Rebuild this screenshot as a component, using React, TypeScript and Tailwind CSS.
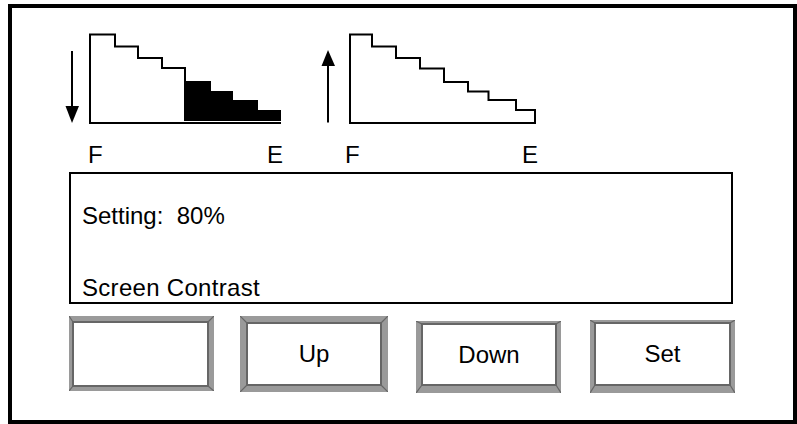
import React from "react";

const font = { fontFamily: '"Liberation Sans", Arial, sans-serif' };

function Btn({
  label,
  outer,
  className,
  w,
  h,
  t,
  l,
  r,
  b,
}: {
  label?: string;
  outer: string;
  className: string;
  w: number;
  h: number;
  t: number;
  l: number;
  r: number;
  b: number;
}) {
  return (
    <div className={`relative ${className} ${outer} border-solid border-[#9a9a9a] bg-white flex`}>
      <div className="flex-1 border-2 border-[#666666] bg-white flex items-center justify-center text-[24px] leading-[24px] text-black">
        {label}
      </div>
      <svg
        className="absolute pointer-events-none"
        style={{ left: -l, top: -t }}
        width={w}
        height={h}
        viewBox={`0 0 ${w} ${h}`}
      >
        <g stroke="#666666" strokeWidth="1.2">
          <line x1="0" y1="0" x2={l + 1} y2={t + 1} />
          <line x1={w} y1="0" x2={w - r - 1} y2={t + 1} />
          <line x1="0" y1={h} x2={l + 1} y2={h - b - 1} />
          <line x1={w} y1={h} x2={w - r - 1} y2={h - b - 1} />
        </g>
      </svg>
    </div>
  );
}

export default function App() {
  return (
    <div className="w-[797px] h-[424px] bg-white" style={font}>
      <div className="ml-[8px] mt-[4px] w-[789px] h-[420px] border-4 border-black box-border">
        {/* charts */}
        <div className="h-[164px] flex pt-[20px]">
          <div className="ml-[48px] flex flex-col">
            <svg width="225" height="98" viewBox="60 28 225 98">
              <line x1="72" y1="51" x2="72" y2="108" stroke="black" strokeWidth="2" />
              <polygon points="65.5,106 79,106 72,123" fill="black" />
              <polyline
                points="90,124 90,34.5 115,34.5 115,46.5 138,46.5 138,58 162,58 162,68 185,68 185,82"
                fill="none"
                stroke="black"
                strokeWidth="2"
              />
              <polygon
                points="184,81 211,81 211,91 233,91 233,100 258,100 258,110 281,110 281,121 184,121"
                fill="black"
              />
              <line x1="89" y1="123" x2="281" y2="123" stroke="black" strokeWidth="2" />
            </svg>
            <div className="mt-[17px] ml-[28px] w-[195px] flex justify-between text-[24px] leading-[24px] text-black">
              <span>F</span>
              <span>E</span>
            </div>
          </div>
          <div className="ml-[33px] flex flex-col">
            <svg width="222" height="98" viewBox="318 28 222 98">
              <line x1="328" y1="64" x2="328" y2="122.5" stroke="black" strokeWidth="2" />
              <polygon points="321.5,66 335,66 328,50" fill="black" />
              <polygon
                points="350,123 350,34.5 372,34.5 372,46.5 396,46.5 396,58 420,58 420,68.5 444,68.5 444,82 468,82 468,91.5 488.5,91.5 488.5,100 516,100 516,110 535,110 535,123"
                fill="none"
                stroke="black"
                strokeWidth="2"
              />
            </svg>
            <div className="mt-[17px] ml-[27px] w-[193px] flex justify-between text-[24px] leading-[24px] text-black">
              <span>F</span>
              <span>E</span>
            </div>
          </div>
        </div>

        {/* message box */}
        <div className="ml-[57px] w-[664px] h-[132px] border-2 border-black pl-[11px] pt-[30px] text-[24px] leading-[24px] text-black">
          <div className="whitespace-pre">Setting:  80%</div>
          <div className="mt-[48px] tracking-[0.3px]">Screen Contrast</div>
        </div>

        {/* buttons */}
        <div className="ml-[57px] mt-[12px] flex items-start">
          <Btn
            className="w-[145px] h-[75px]"
            outer="border-t-[5px] border-l-[3px] border-r-[5px] border-b-[4px]"
            w={145}
            h={75}
            t={5}
            l={3}
            r={5}
            b={4}
          />
          <Btn
            label="Up"
            className="ml-[26px] w-[148px] h-[76px]"
            outer="border-[6px]"
            w={148}
            h={76}
            t={6}
            l={6}
            r={6}
            b={6}
          />
          <Btn
            label="Down"
            className="ml-[28px] mt-[5px] w-[145px] h-[72px]"
            outer="border-t-[2px] border-l-[5px] border-r-[4px] border-b-[7px]"
            w={145}
            h={72}
            t={2}
            l={5}
            r={4}
            b={7}
          />
          <Btn
            label="Set"
            className="ml-[29px] mt-[4px] w-[145px] h-[73px]"
            outer="border-t-[2px] border-l-[4px] border-r-[4px] border-b-[7px]"
            w={145}
            h={73}
            t={2}
            l={4}
            r={4}
            b={7}
          />
        </div>
      </div>
    </div>
  );
}
